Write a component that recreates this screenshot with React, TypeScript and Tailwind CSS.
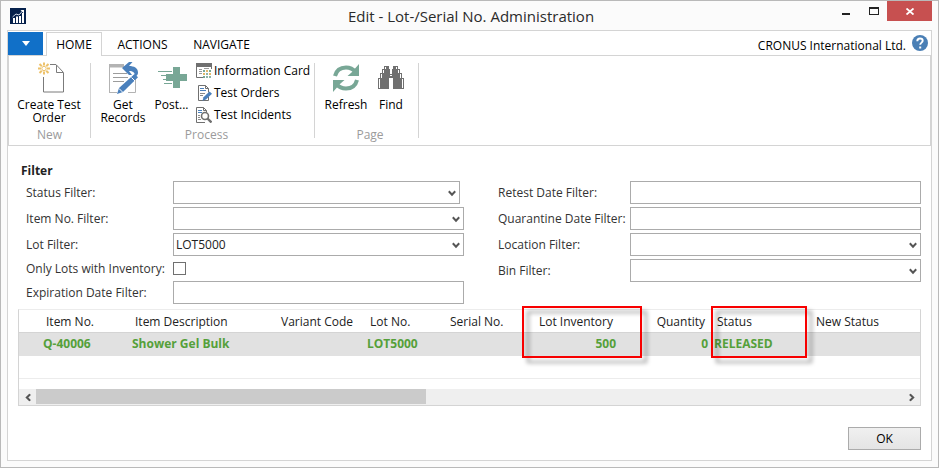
import type { ReactNode } from "react";

const GREEN = "#78a796";

function AppLogo() {
  return (
    <svg width="16" height="16" viewBox="0 0 16 16" aria-hidden="true">
      <rect width="16" height="16" fill="#06214c" />
      <path d="M3 15v-5h2v5zM6 15V8.500h2v6.500zM9 15V8h2v7zM12 15V5h2v10z" fill="#fff" />
      <path d="M2.500 9 6 6l3 1 4-4.500" fill="none" stroke="#c9d3e2" strokeWidth="1" />
      <path d="M10.500 2H14v3.500z" fill="#fff" />
    </svg>
  );
}

function NewDocumentIcon() {
  return (
    <svg width="32" height="32" viewBox="0 0 32 32" aria-hidden="true">
      <path d="M17 2.500h6l7.500 8v19.500h-20V15" fill="none" stroke="#7b7b7b" />
      <path d="M23.500 3v7.500H30" fill="none" stroke="#7b7b7b" />
      <g stroke="#edc26b" strokeWidth="2">
        <path d="M11 .5v3M11 9.500v3M5 6.500h3M14 6.500h3M6.500 2l2.300 2.300M13.200 8.700l2.300 2.300M15.500 2l-2.300 2.300M8.800 8.700 6.500 11" />
      </g>
      <circle cx="11" cy="6.500" r="2.200" fill="#fff" stroke="#edc26b" />
    </svg>
  );
}

function GetRecordsIcon() {
  return (
    <svg width="32" height="32" viewBox="0 0 32 32" aria-hidden="true">
      <path d="M2.500 31V3M2 30.500h8M21 30.500h7.500V16" fill="none" stroke="#b3b3b3" />
      <path d="M2 2h15v3.500H2z" fill="#b3b3b3" />
      <path d="M6 11.500h14M6 15.500h15M6 19.500h11" stroke="#9c9c9c" />
      <path d="M15 6 22 0h3.500L22 4c5 0 9 2 9 6.500 0 2-1 3.500-3 4 0-4-2-5.500-6-5.500l3 4h-3z" fill="#4a80bc" />
      <path d="m27.500 12 3.500 3.200L16 30l-6 2 2-6z" fill="#4a80bc" />
      <path d="m24.500 15.500 3.500 3.500M12 26.500l3.500 3.500" stroke="#fff" strokeWidth="1" />
    </svg>
  );
}

function PostIcon() {
  return (
    <svg width="32" height="32" viewBox="0 0 32 32" aria-hidden="true">
      <path d="M17 5h7v7h7v7h-7v7h-7v-7h-7v-7h7z" fill={GREEN} />
      <path d="M2 9.500h14M5 13.500h6M7 17.500h4M8 21.500h8" stroke={GREEN} />
    </svg>
  );
}

function RefreshIcon() {
  return (
    <svg width="32" height="32" viewBox="0 0 32 32" aria-hidden="true">
      <path d="M5 14C6.500 8 11 5.500 16 5.500s7.500 2 9.500 4.500M27 18c-1.500 6-6 8.500-11 8.500s-7.500-2-9.500-4.500" fill="none" stroke={GREEN} strokeWidth="4" />
      <path d="M29 2v12H17.500l4-3.500z" fill={GREEN} />
      <path d="M3 30V18h11.500l-4 3.500z" fill={GREEN} />
    </svg>
  );
}

function FindIcon() {
  return (
    <svg width="32" height="32" viewBox="0 0 32 32" aria-hidden="true">
      <path d="M9 4h5v3h1v5h2V7h1V4h5v3h2v4h2v5h2v11H18V16h-4v11H3V16h2v-5h2V7h2z" fill="#707070" />
      <path d="M4.500 17v9M6.500 12v4M8.500 8v3M27.500 17v9M25.500 12v4M23.500 8v3M10.500 5v2M21.500 5v2M15 13.500h2" stroke="#fff" strokeWidth="1" />
    </svg>
  );
}

function InfoCardIcon() {
  return (
    <svg width="16" height="16" viewBox="0 0 16 16" aria-hidden="true">
      <path d="M.5 1v13.500H7M15.500 1v5" fill="none" stroke="#707070" />
      <path d="M0 0h16v4H0z" fill="#707070" />
      <path d="M3 6.500h3M3 8.500h3M3 10.500h3M8 5.500h5" stroke="#9a9a9a" />
      <path d="M7 7h2v2H7zM13 7h2v2h-2zM7 13h2v2H7z" fill={GREEN} />
      <path d="M10 7h2v2h-2zM7 10h2v2H7zM13 10h2v2h-2z" fill="#e3b968" />
      <path d="M10 10h2v2h-2zM10 13h2v2h-2zM13 13h2v2h-2z" fill="#8fb5a6" />
    </svg>
  );
}

function TestOrdersIcon() {
  return (
    <svg width="16" height="16" viewBox="0 0 16 16" aria-hidden="true">
      <path d="M2.500.5h7l3 3v4M12.500 12v3.500h-10V.5M9.500.5v3h3" fill="none" stroke="#707070" />
      <path d="M4 3.500h4M4 5.500h6" stroke="#4a80bc" />
      <path d="M4 8.500h5M4 10.500h3" stroke="#8a8a8a" />
      <path d="m13.500 6.500 2.500 2.300-6 5.700-3.500 1.200 1-3.500z" fill="#4a80bc" />
    </svg>
  );
}

function TestIncidentsIcon() {
  return (
    <svg width="16" height="16" viewBox="0 0 16 16" aria-hidden="true">
      <path d="M9 15.500H.5V.5h7l3 3v2M7.500.5v3h3" fill="none" stroke="#707070" />
      <path d="M2 3.500h4M2 5.500h4" stroke="#4a80bc" />
      <path d="M2 8.500h2M2 10.500h2M2 12.500h3" stroke="#8a8a8a" />
      <circle cx="9" cy="9" r="3.500" fill="#fff" stroke="#707070" strokeWidth="1.600" />
      <path d="m11.500 11.500 4 4" stroke="#707070" strokeWidth="2.400" />
    </svg>
  );
}

function Chevron({ className = "" }: { className?: string }) {
  return (
    <svg width="8" height="7" viewBox="0 0 8 7" className={className} aria-hidden="true">
      <path d="M.8 1.300 4 4.700l3.200-3.400" fill="none" stroke="#555" strokeWidth="2" />
    </svg>
  );
}

function LargeAction({ icon, children, className }: { icon: ReactNode; children: ReactNode; className: string }) {
  return (
    <button type="button" className={`flex flex-col items-center leading-[13px] ${className}`}>
      {icon}
      <span className="mt-1">{children}</span>
    </button>
  );
}

function SmallAction({ icon, children }: { icon: ReactNode; children: ReactNode }) {
  return (
    <button type="button" className="flex h-[22px] items-center gap-[2px] whitespace-nowrap">
      {icon}
      {children}
    </button>
  );
}

function RibbonGroup({ label, className, children }: { label: string; className: string; children: ReactNode }) {
  return (
    <section aria-label={label} className={`flex flex-col justify-between border-r border-[#d4d4d4] ${className}`}>
      <div className="-mt-px flex items-start">{children}</div>
      <div className="-mb-[3px] text-center leading-[13px] text-[#9b9b9b]">{label}</div>
    </section>
  );
}

const FIELD = "h-[23px] w-full appearance-none rounded-none border border-[#ababab] bg-white px-[2px] text-[#222] outline-none";

function FilterRow({ id, label, kind = "text", value = "", wide = false, narrow = false }: {
  id: string;
  label: string;
  kind?: "text" | "select" | "check";
  value?: string;
  wide?: boolean;
  narrow?: boolean;
}) {
  return (
    <div className={`flex ${kind === "check" ? "h-[19px] items-center" : "h-[23px] items-center"}`}>
      <label htmlFor={id} className={`shrink-0 whitespace-nowrap ${wide ? "w-[147px]" : "w-[132px]"}`}>
        {label}
      </label>
      {kind === "check" && (
        <input id={id} type="checkbox" className="size-[13px] appearance-none border border-[#707070] bg-white" />
      )}
      {kind === "text" && <input id={id} type="text" defaultValue={value} className={FIELD} />}
      {kind === "select" && (
        <div className={`relative flex-1 ${narrow ? "mr-1" : ""}`}>
          <select id={id} defaultValue={value} className={`${FIELD} block`}>
            <option value={value}>{value}</option>
          </select>
          <Chevron className="pointer-events-none absolute top-[9px] right-1" />
        </div>
      )}
    </div>
  );
}

function Callout({ className }: { className: string }) {
  return (
    <span
      aria-hidden="true"
      className={`pointer-events-none absolute -top-1 left-0 z-10 h-[52px] border-2 border-[#f80000] drop-shadow-[5px_5px_2px_rgba(0,0,0,0.4)] ${className}`}
    />
  );
}

const COLUMNS = [
  { name: "Item No.", cell: "Q-40006", width: "w-[89px]" },
  { name: "Item Description", cell: "Shower Gel Bulk", width: "w-[146px]" },
  { name: "Variant Code", cell: "", width: "w-[89px]" },
  { name: "Lot No.", cell: "LOT5000", width: "w-[80px]" },
  { name: "Serial No.", cell: "", width: "w-[78px]" },
  { name: "Lot Inventory", cell: "500", width: "w-[97px]", right: true, callout: "w-[120px]" },
  { name: "Quantity", cell: "0", width: "w-[92px]", right: true },
  { name: "Status", cell: "RELEASED", width: "w-[99px]", callout: "w-[96px]" },
  { name: "New Status", cell: "", width: "" },
];

export default function App() {
  return (
    <div className="border border-[#b9b9b9] bg-[#fbfbfb] font-['Open_Sans','Noto_Sans',sans-serif] text-xs text-black">
      <header className="flex h-[29px] items-center pl-[9px] pr-[6px]">
        <div className="flex flex-1">
          <AppLogo />
        </div>
        <h1 className="text-[15px] leading-[22px] text-[#2b2b2b]">Edit - Lot-/Serial No. Administration</h1>
        <div className="flex flex-1 items-start justify-end self-stretch">
          <button type="button" aria-label="Minimize" className="flex h-5 w-[27px] items-center justify-center">
            <svg width="11" height="8" aria-hidden="true"><path d="M1 6h8v2H1z" fill="#222" /></svg>
          </button>
          <button type="button" aria-label="Maximize" className="flex h-5 w-[27px] items-center justify-center">
            <svg width="10" height="8" aria-hidden="true"><path d="M0 0h10v8H0zM1 2v5h8V2z" fill="#222" fillRule="evenodd" /></svg>
          </button>
          <button type="button" aria-label="Close" className="flex h-5 w-[45px] items-center justify-center bg-[#c75050]">
            <svg width="8" height="7" aria-hidden="true"><path d="m.5.5 7 6m0-6-7 6" stroke="#fff" strokeWidth="1.800" /></svg>
          </button>
        </div>
      </header>

      <main className="mx-[6px] mb-[6px] border border-[#d4d4d4] bg-white">
        <div className="flex h-6 items-end pr-[3px]">
          <button type="button" aria-label="Application menu" className="flex h-[23px] w-[35px] items-center justify-center self-end bg-[#1170c8]">
            <svg width="8" height="5" aria-hidden="true"><path d="M0 0h8L4 5z" fill="#fff" /></svg>
          </button>
          <nav className="flex flex-1 items-end">
            <button type="button" className="z-10 -mb-px ml-[3px] h-6 w-14 border border-b-0 border-[#d4d4d4] bg-white pt-px">HOME</button>
            <button type="button" className="h-[22px] w-[81px] pt-[2px]">ACTIONS</button>
            <button type="button" className="h-[22px] w-[77px] pt-[2px]">NAVIGATE</button>
          </nav>
          <span className="mr-[6px] leading-[18px]">CRONUS International Ltd.</span>
          <button type="button" aria-label="Help" className="flex size-4 self-center">
            <svg width="16" height="16" viewBox="0 0 16 16" aria-hidden="true">
              <circle cx="8" cy="8" r="8" fill="#4a7fb5" />
              <path d="M5.300 6.200C5.300 4.300 6.500 3.500 8 3.500s2.700.9 2.700 2.300c0 1.800-2.500 1.900-2.500 4" fill="none" stroke="#fff" strokeWidth="1.900" />
              <path d="M7.200 11.500h2v2h-2z" fill="#fff" />
            </svg>
          </button>
        </div>

        <div className="flex h-[91px] border border-[#d4d4d4] py-[7px]">
          <RibbonGroup label="New" className="w-[82px]">
            <LargeAction icon={<NewDocumentIcon />} className="w-[80px]">Create Test<br />Order</LargeAction>
          </RibbonGroup>
          <RibbonGroup label="Process" className="w-[224px] pl-[8px]">
            <LargeAction icon={<GetRecordsIcon />} className="w-[48px]">Get<br />Records</LargeAction>
            <LargeAction icon={<PostIcon />} className="w-[49px]">Post...</LargeAction>
            <div className="-mt-[2px] flex flex-col">
              <SmallAction icon={<InfoCardIcon />}>Information Card</SmallAction>
              <SmallAction icon={<TestOrdersIcon />}>Test Orders</SmallAction>
              <SmallAction icon={<TestIncidentsIcon />}>Test Incidents</SmallAction>
            </div>
          </RibbonGroup>
          <RibbonGroup label="Page" className="w-[104px] pl-[7px]">
            <LargeAction icon={<RefreshIcon />} className="w-[48px]">Refresh</LargeAction>
            <LargeAction icon={<FindIcon />} className="w-[42px]">Find</LargeAction>
          </RibbonGroup>
        </div>

        <div className="px-[10px] pt-4 pb-[10px]">
          <h2 className="h-[19px] pl-[3px] leading-[18px] font-bold text-[#222]">Filter</h2>
          <form className="grid grid-cols-[438fr_423fr] gap-[34px] pl-2 text-[#333]">
            <div className="flex flex-col gap-[3px]">
              <FilterRow id="status" label="Status Filter:" kind="select" wide narrow />
              <FilterRow id="item" label="Item No. Filter:" kind="select" wide />
              <FilterRow id="lot" label="Lot Filter:" kind="select" value="LOT5000" wide />
              <FilterRow id="inventory" label="Only Lots with Inventory:" kind="check" wide />
              <FilterRow id="expiration" label="Expiration Date Filter:" wide />
            </div>
            <div className="flex flex-col gap-[3px]">
              <FilterRow id="retest" label="Retest Date Filter:" />
              <FilterRow id="quarantine" label="Quarantine Date Filter:" />
              <FilterRow id="location" label="Location Filter:" kind="select" />
              <FilterRow id="bin" label="Bin Filter:" kind="select" />
            </div>
          </form>

          <div className="mt-[5px] border border-t-[#ececec] border-[#d4d4d4]">
            <table className="w-full table-fixed border-collapse text-[#222]">
              <thead>
                <tr className="h-[22px] border-b border-[#d4d4d4]">
                  <th className="w-[21px] p-0" />
                  {COLUMNS.map((c) => (
                    <th key={c.name} scope="col" className={`relative px-[6px] pt-[2px] pb-0 leading-[20px] font-normal whitespace-nowrap ${c.right ? "text-right" : "text-left"} ${c.width}`}>
                      {c.name}
                      {c.callout && <Callout className={c.callout} />}
                    </th>
                  ))}
                </tr>
              </thead>
              <tbody>
                <tr className="h-[23px] bg-[#e1e1e1] font-bold text-[#55a03a]">
                  <td className="p-0" />
                  {COLUMNS.map((c) => (
                    <td key={c.name} className={`p-0 px-[3px] leading-[20px] whitespace-nowrap ${c.right ? "text-right" : "text-left"}`}>{c.cell}</td>
                  ))}
                </tr>
                <tr className="h-[23px] border-b border-[#ececec]">
                  <td colSpan={10} className="p-0" />
                </tr>
              </tbody>
            </table>
            <div className="mt-[10px] flex h-4 items-stretch bg-[#efefef]">
              <button type="button" aria-label="Scroll left" className="flex w-[17px] items-center justify-center">
                <Chevron className="rotate-90" />
              </button>
              <div className="flex-1 pb-px">
                <div className="h-full w-[45%] bg-[#cbcbcb]" />
              </div>
              <button type="button" aria-label="Scroll right" className="flex w-[17px] items-center justify-center">
                <Chevron className="-rotate-90" />
              </button>
            </div>
          </div>

          <div className="mt-[21px] flex justify-end">
            <button type="button" className="h-[23px] w-[73px] border border-[#ababab] bg-linear-to-b from-[#f0f0f0] to-[#e4e4e4]">OK</button>
          </div>
        </div>
      </main>
    </div>
  );
}
